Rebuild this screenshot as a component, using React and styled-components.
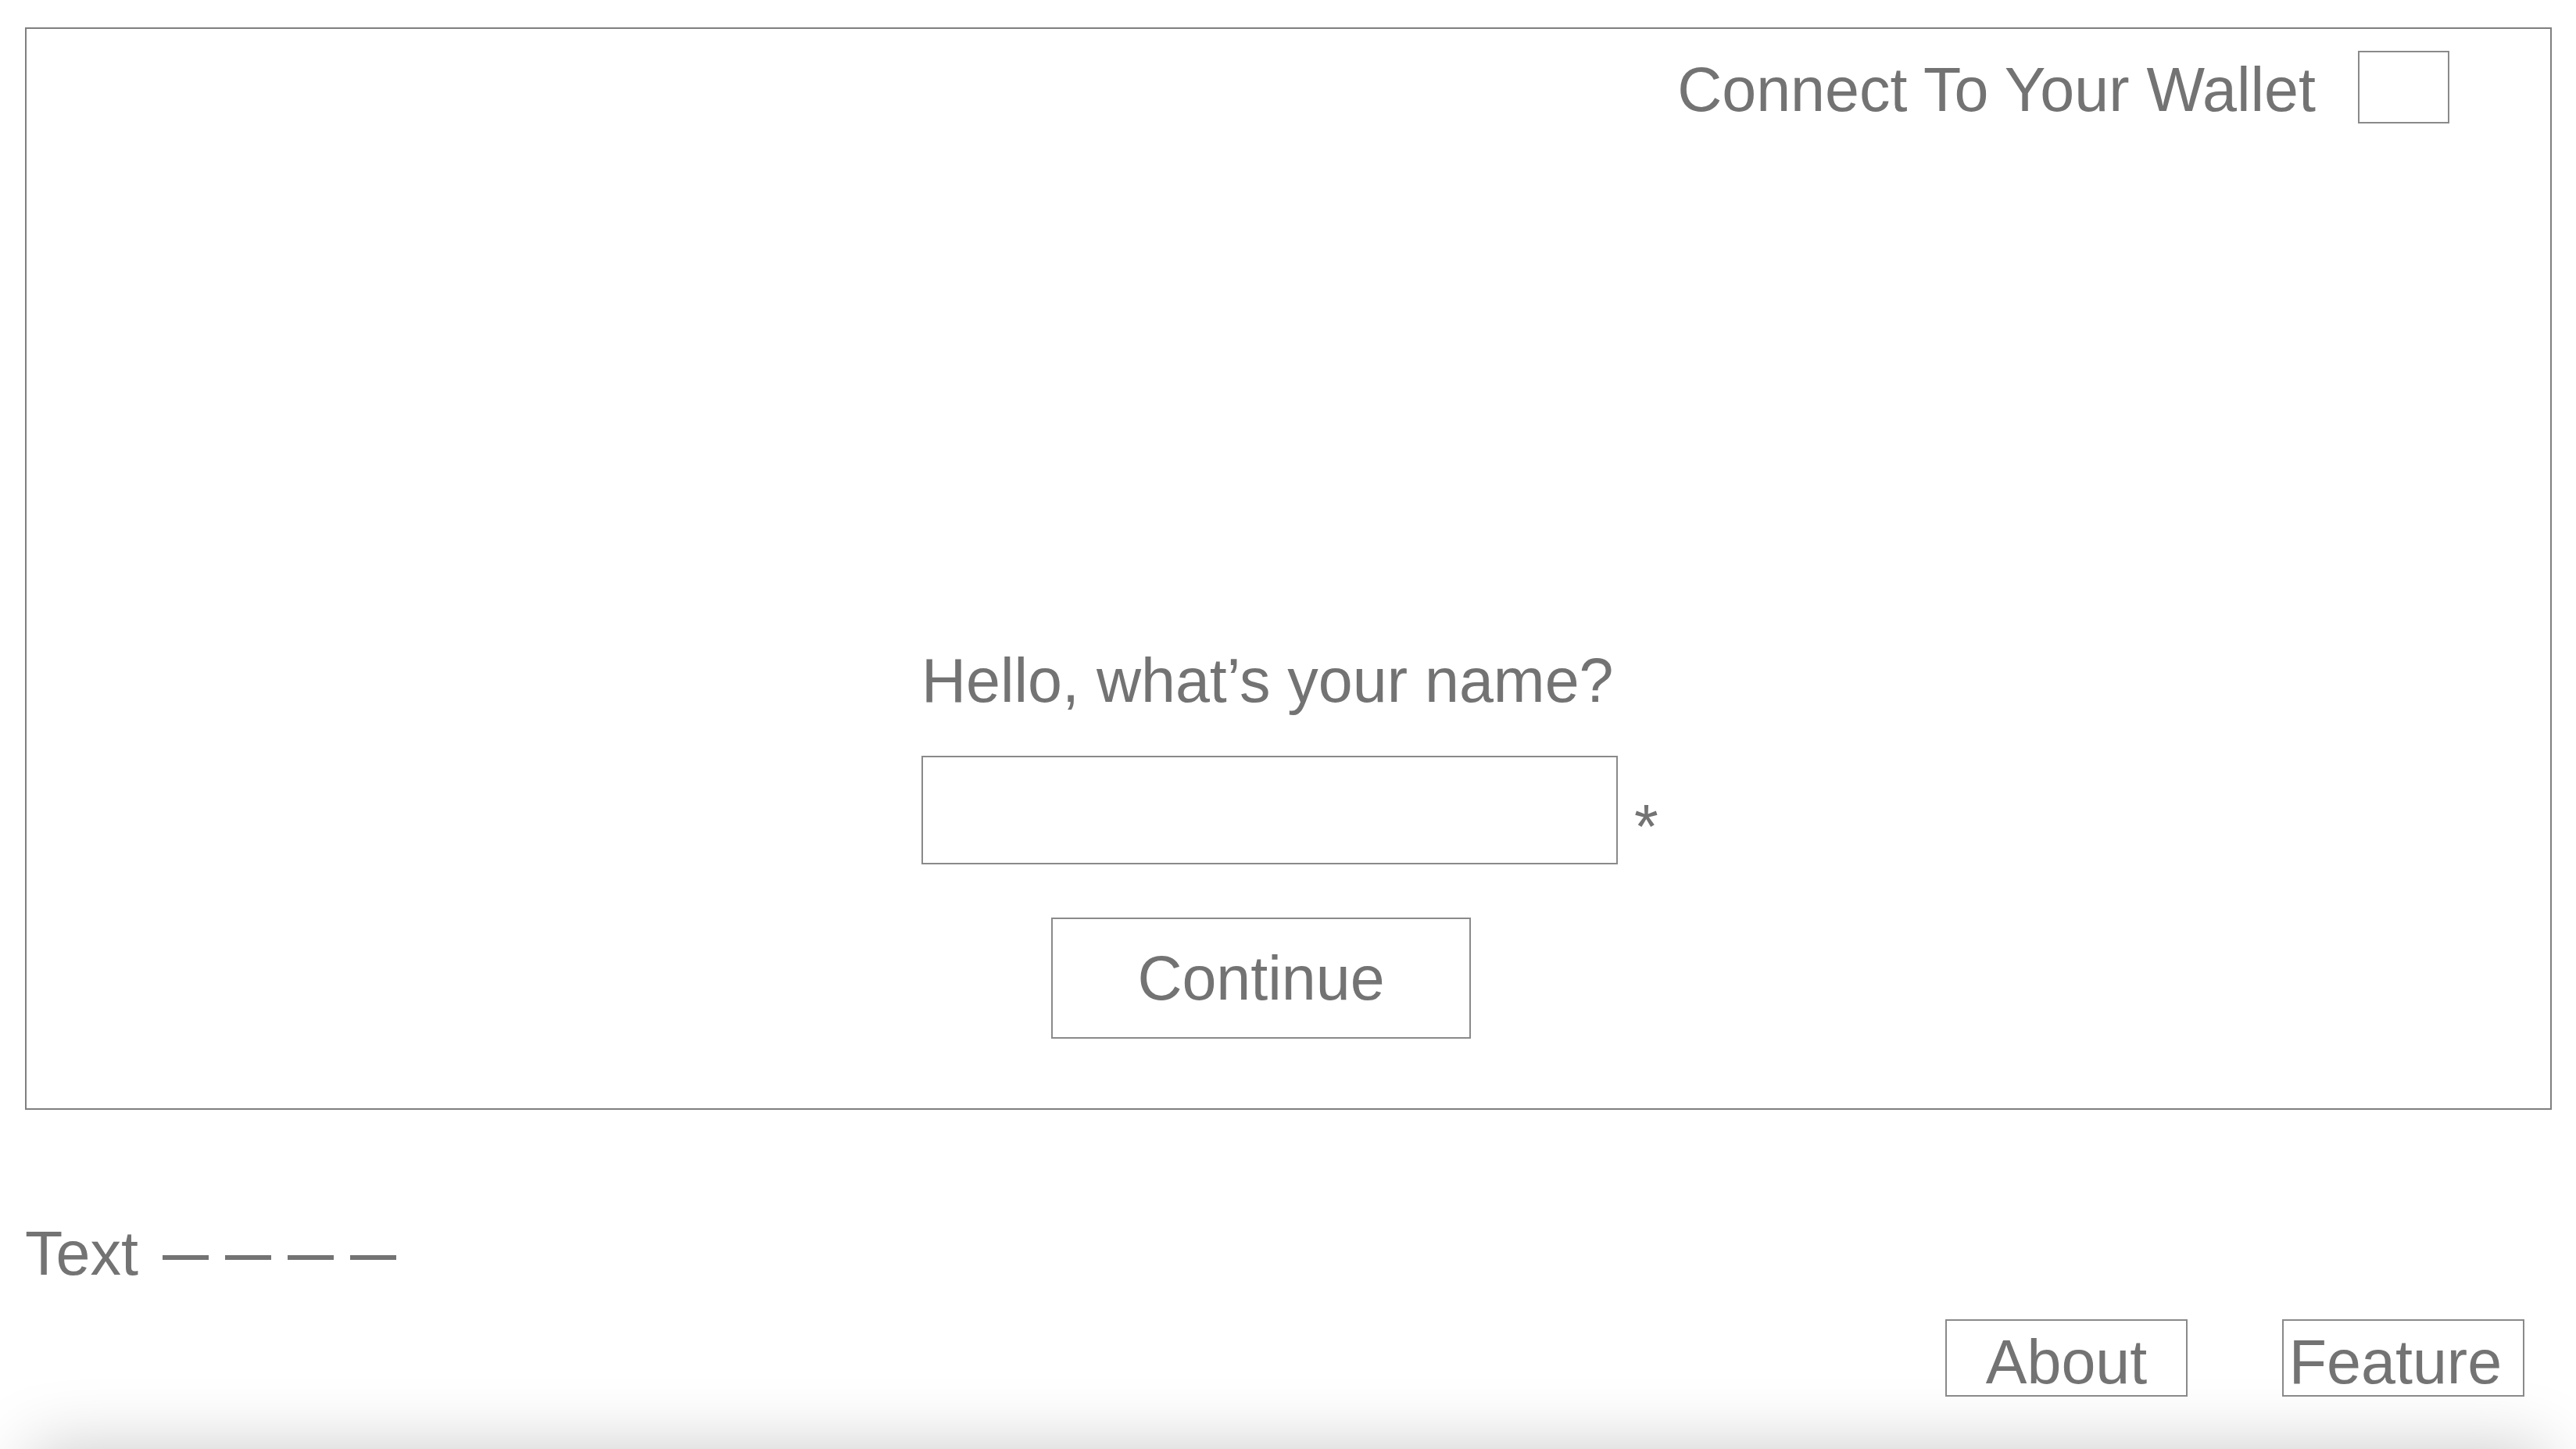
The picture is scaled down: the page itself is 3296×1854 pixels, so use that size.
import React, { useState } from 'react'
import styled, { createGlobalStyle } from 'styled-components'

const GlobalStyle = createGlobalStyle`
  html, body {
    margin: 0;
    padding: 0;
    background: #ffffff;
    overflow: hidden;
  }
  body {
    font-family: "Liberation Sans", Arial, Helvetica, sans-serif;
    color: #737373;
  }
`

const Page = styled.div`
  height: 100vh;
  overflow: hidden;
  padding: 35px 31px 0 32px;
  box-sizing: border-box;
`

const Panel = styled.section`
  height: 1385px;
  box-sizing: border-box;
  border: 2px solid #7f7f7f;
  display: flex;
  flex-direction: column;
  padding: 28px 0 89px;
`

const Header = styled.header`
  display: flex;
  justify-content: flex-end;
  align-items: flex-start;
  gap: 54px;
  padding-right: 129px;
`

const BigText = styled.span`
  font-size: 79px;
  line-height: 90px;
  white-space: nowrap;
`

const WalletTitle = styled(BigText)`
  margin-top: 5px;
`

const WalletBox = styled.div`
  width: 117px;
  height: 93px;
  box-sizing: border-box;
  border: 2px solid #8a8a8a;
`

const NameForm = styled.form`
  margin-top: auto;
  align-self: center;
  width: 939px;
  display: flex;
  flex-direction: column;
  align-items: flex-start;
`

const InputRow = styled.div`
  margin-top: 51px;
  display: flex;
  align-items: flex-end;
`

const NameInput = styled.input`
  width: 891px;
  height: 139px;
  box-sizing: border-box;
  border: 2px solid #8a8a8a;
  outline: none;
  padding: 0 24px;
  font-family: inherit;
  font-size: 60px;
  color: #737373;
  background: #fff;
`

const Required = styled(BigText)`
  margin-left: 21px;
  margin-bottom: 3px;
`

const OutlineButton = styled.button`
  box-sizing: border-box;
  border: 2px solid #8a8a8a;
  border-radius: 0;
  background: #fff;
  color: #737373;
  font-family: inherit;
  font-size: 79px;
  line-height: 90px;
  padding: ${p => p.$shift || 0}px ${p => p.$padRight || 0}px 0 0;
  width: ${p => p.$w}px;
  height: ${p => p.$h}px;
  text-align: center;
  white-space: nowrap;
  cursor: pointer;
`

const ContinueButton = styled(OutlineButton)`
  margin-top: 68px;
  margin-left: 166px;
`

const FooterLine = styled.div`
  margin-top: 139px;
  font-size: 79px;
  line-height: 90px;
  white-space: nowrap;
`

const Dashes = styled.span`
  margin-left: 31px;
  font-size: 59px;
  font-weight: bold;
  letter-spacing: 21px;
  vertical-align: 6px;
`

const Nav = styled.nav`
  margin-top: 38px;
  display: flex;
  justify-content: flex-end;
  gap: 121px;
  padding-right: 35px;
`

const ShadowBar = styled.div`
  margin: 68px 8px 0 8px;
  height: 200px;
  background: #fff;
  box-shadow: 0 0 90px 0 rgba(0, 0, 0, 0.22);
`

const App = () => {
  const [name, setName] = useState('')

  const handleSubmit = (e) => {
    e.preventDefault()
  }

  return (
    <>
      <GlobalStyle />
      <Page>
        <Panel>
          <Header>
            <WalletTitle>Connect To Your Wallet</WalletTitle>
            <WalletBox />
          </Header>

          <NameForm onSubmit={handleSubmit}>
            <BigText>Hello, what’s your name?</BigText>
            <InputRow>
              <NameInput type='text' value={name} onChange={(e) => setName(e.target.value)} />
              <Required>*</Required>
            </InputRow>
            <ContinueButton type='submit' $w={537} $h={155}>Continue</ContinueButton>
          </NameForm>
        </Panel>

        <FooterLine>
          Text<Dashes>————</Dashes>
        </FooterLine>

        <Nav>
          <OutlineButton $w={310} $h={99} $shift={8}>About</OutlineButton>
          <OutlineButton $w={310} $h={99} $shift={8} $padRight={20}>Feature</OutlineButton>
        </Nav>

        <ShadowBar />
      </Page>
    </>
  )
}

export default App
